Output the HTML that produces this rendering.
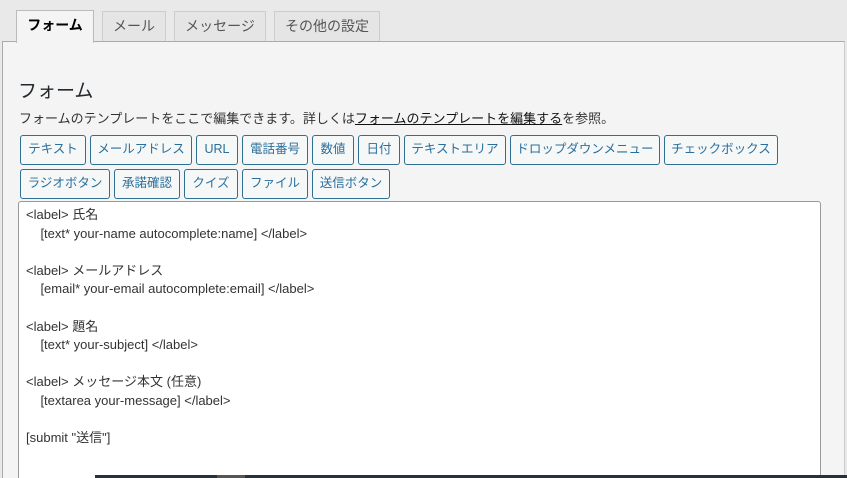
<!DOCTYPE html>
<html style="width:847px;height:478px;overflow:hidden"><head><meta charset="utf-8"><style>
body{margin:0;width:847px;height:478px;overflow:hidden;background:#e9e9e9;font-family:"Liberation Sans","Noto Sans CJK JP",sans-serif;color:#23282d;position:relative}
.tab{position:absolute;top:11px;height:30px;border:1px solid #ccc;border-bottom:none;background:#e5e5e5;font-size:14px;line-height:29px;text-align:center;color:#555;box-sizing:border-box}
.tab.a{background:#f4f4f4;color:#000;font-weight:bold;border-color:#bbb}
.panel{position:absolute;left:2px;top:41px;width:843px;height:437px;background:#f4f4f4;border-left:1px solid #aaa;border-right:1px solid #ccc;border-top:1px solid #aaa;box-sizing:border-box}
h2{position:absolute;left:18px;top:76px;margin:0;font-size:19px;font-weight:normal;color:#23282d}
.desc{position:absolute;left:19px;top:108px;font-size:13px;color:#333}
.desc u{color:#111}
.btn{position:absolute;height:30px;border:1px solid #2e6f93;border-radius:3px;background:#f6f7f7;color:#2a6f9c;font-size:12.5px;line-height:27px;text-align:center;box-sizing:border-box}
.ta{position:absolute;left:18px;top:201px;width:803px;height:277px;background:#fff;border:1px solid #999;border-bottom:none;border-radius:3px 3px 0 0;box-sizing:border-box;font-size:13px;color:#333;padding:4px 7px;line-height:18.6px;white-space:pre;overflow:hidden}
.bar{position:absolute;left:95px;top:475px;width:752px;height:3px;background:#263238}
</style></head><body>
<div class="panel"></div>
<div class="tab a" style="left:16px;top:10px;width:78px;height:33px">フォーム</div>
<div class="tab" style="left:102px;width:64px">メール</div>
<div class="tab" style="left:174px;width:92px">メッセージ</div>
<div class="tab" style="left:274px;width:106px">その他の設定</div>
<h2>フォーム</h2>
<div class="desc">フォームのテンプレートをここで編集できます。詳しくは<u>フォームのテンプレートを編集する</u>を参照。</div>
<div class="btn" style="left:20px;top:135px;width:66px">テキスト</div>
<div class="btn" style="left:90px;top:135px;width:102px">メールアドレス</div>
<div class="btn" style="left:196px;top:135px;width:42px">URL</div>
<div class="btn" style="left:242px;top:135px;width:66px">電話番号</div>
<div class="btn" style="left:312px;top:135px;width:42px">数値</div>
<div class="btn" style="left:358px;top:135px;width:42px">日付</div>
<div class="btn" style="left:404px;top:135px;width:102px">テキストエリア</div>
<div class="btn" style="left:510px;top:135px;width:150px">ドロップダウンメニュー</div>
<div class="btn" style="left:664px;top:135px;width:114px">チェックボックス</div>
<div class="btn" style="left:20px;top:169px;width:90px">ラジオボタン</div>
<div class="btn" style="left:114px;top:169px;width:66px">承諾確認</div>
<div class="btn" style="left:184px;top:169px;width:54px">クイズ</div>
<div class="btn" style="left:242px;top:169px;width:66px">ファイル</div>
<div class="btn" style="left:312px;top:169px;width:78px">送信ボタン</div>
<div class="ta">&lt;label&gt; 氏名
    [text* your-name autocomplete:name] &lt;/label&gt;

&lt;label&gt; メールアドレス
    [email* your-email autocomplete:email] &lt;/label&gt;

&lt;label&gt; 題名
    [text* your-subject] &lt;/label&gt;

&lt;label&gt; メッセージ本文 (任意)
    [textarea your-message] &lt;/label&gt;

[submit "送信"]</div>
<div class="bar"></div>
<div style="position:absolute;left:217px;top:475px;width:28px;height:3px;background:#555"></div>
</body></html>
